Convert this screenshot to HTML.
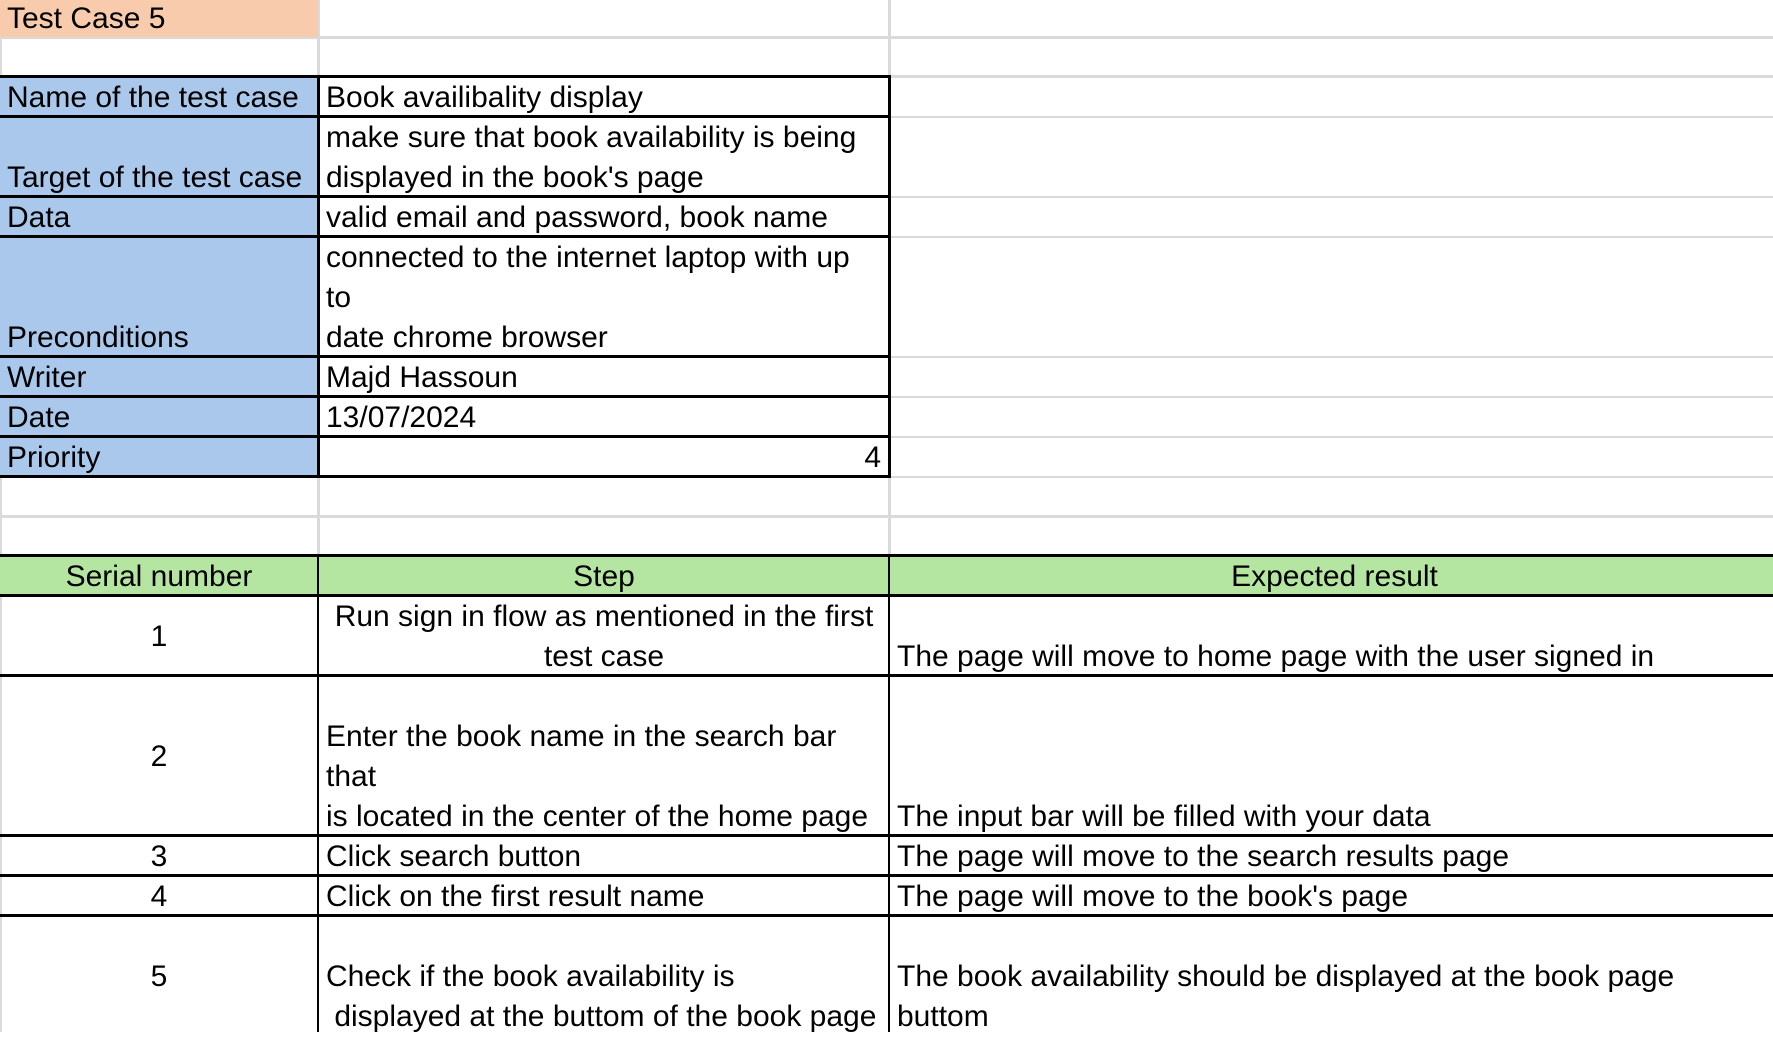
<!DOCTYPE html>
<html><head><meta charset="utf-8"><style>
*{margin:0;padding:0;box-sizing:border-box}
body{width:1773px;height:1032px;overflow:hidden;background:#fff;font-family:"Liberation Sans",Arial,sans-serif;font-size:30px;color:#000;position:relative}
.g{position:absolute;background:#dadada}
.c{position:absolute;display:flex;flex-direction:column;justify-content:flex-end;line-height:40px;white-space:pre;padding-left:7px;overflow:hidden}
.b{position:absolute;background:#000}
</style></head><body>
<div class="g" style="left:0;top:36px;width:1773px;height:3px"></div>
<div class="g" style="left:0;top:75px;width:1773px;height:3px"></div>
<div class="g" style="left:0;top:515px;width:1773px;height:3px"></div>
<div class="g" style="left:0;top:116px;width:1773px;height:2px"></div>
<div class="g" style="left:0;top:196px;width:1773px;height:2px"></div>
<div class="g" style="left:0;top:236px;width:1773px;height:2px"></div>
<div class="g" style="left:0;top:356px;width:1773px;height:2px"></div>
<div class="g" style="left:0;top:396px;width:1773px;height:2px"></div>
<div class="g" style="left:0;top:436px;width:1773px;height:2px"></div>
<div class="g" style="left:0;top:476px;width:1773px;height:2px"></div>
<div class="g" style="left:317px;top:0;width:3px;height:556px"></div>
<div class="g" style="left:888px;top:0;width:3px;height:556px"></div>
<div class="g" style="left:0;top:0;width:2px;height:1032px"></div>

<div style="position:absolute;left:0;top:0;width:318px;height:37px;background:#f8cbad"></div>
<div style="position:absolute;left:0;top:76px;width:318px;height:400px;background:#a9c8eb"></div>
<div style="position:absolute;left:0;top:556px;width:1773px;height:40px;background:#b5e6a1"></div>

<div class="b" style="left:0;top:75px;width:891px;height:3px"></div>
<div class="b" style="left:0;top:115px;width:891px;height:3px"></div>
<div class="b" style="left:0;top:195px;width:891px;height:3px"></div>
<div class="b" style="left:0;top:235px;width:891px;height:3px"></div>
<div class="b" style="left:0;top:355px;width:891px;height:3px"></div>
<div class="b" style="left:0;top:395px;width:891px;height:3px"></div>
<div class="b" style="left:0;top:435px;width:891px;height:3px"></div>
<div class="b" style="left:0;top:475px;width:891px;height:3px"></div>
<div class="b" style="left:317px;top:75px;width:3px;height:403px"></div>
<div class="b" style="left:888px;top:75px;width:3px;height:403px"></div>

<div class="b" style="left:0;top:554px;width:1773px;height:3px"></div>
<div class="b" style="left:0;top:594px;width:1773px;height:3px"></div>
<div class="b" style="left:0;top:674px;width:1773px;height:3px"></div>
<div class="b" style="left:0;top:834px;width:1773px;height:3px"></div>
<div class="b" style="left:0;top:874px;width:1773px;height:3px"></div>
<div class="b" style="left:0;top:914px;width:1773px;height:3px"></div>
<div class="b" style="left:317px;top:554px;width:2px;height:478px"></div>
<div class="b" style="left:888px;top:554px;width:2px;height:478px"></div>

<div class="c" style="left:0;top:0;width:318px;height:37px;line-height:37px">Test Case 5</div>
<div class="c" style="left:0;top:78px;width:318px;height:40px">Name of the test case</div>
<div class="c" style="left:319px;top:78px;width:570px;height:40px">Book availibality display</div>
<div class="c" style="left:0;top:118px;width:318px;height:80px">Target of the test case</div>
<div class="c" style="left:319px;top:118px;width:570px;height:80px">make sure that book availability is being
displayed in the book's page</div>
<div class="c" style="left:0;top:198px;width:318px;height:40px">Data</div>
<div class="c" style="left:319px;top:198px;width:570px;height:40px">valid email and password, book name</div>
<div class="c" style="left:0;top:238px;width:318px;height:120px">Preconditions</div>
<div class="c" style="left:319px;top:238px;width:570px;height:120px">connected to the internet laptop with up
to
date chrome browser</div>
<div class="c" style="left:0;top:358px;width:318px;height:40px">Writer</div>
<div class="c" style="left:319px;top:358px;width:570px;height:40px">Majd Hassoun</div>
<div class="c" style="left:0;top:398px;width:318px;height:40px">Date</div>
<div class="c" style="left:319px;top:398px;width:570px;height:40px">13/07/2024</div>
<div class="c" style="left:0;top:438px;width:318px;height:40px">Priority</div>
<div class="c" style="left:319px;top:438px;width:570px;height:40px;text-align:right;padding-right:8px">4</div>

<div class="c" style="left:0;top:557px;width:318px;height:40px;text-align:center;padding:0">Serial number</div>
<div class="c" style="left:319px;top:557px;width:570px;height:40px;text-align:center;padding:0">Step</div>
<div class="c" style="left:890px;top:557px;width:889px;height:40px;text-align:center;padding:0">Expected result</div>

<div class="c" style="left:0;top:597px;width:318px;height:80px;justify-content:center;text-align:center;padding:0">1</div>
<div class="c" style="left:319px;top:597px;width:570px;height:80px;text-align:center;padding:0">Run sign in flow as mentioned in the first
test case</div>
<div class="c" style="left:890px;top:597px;width:883px;height:80px">The page will move to home page with the user signed in</div>

<div class="c" style="left:0;top:677px;width:318px;height:160px;justify-content:center;text-align:center;padding:0">2</div>
<div class="c" style="left:319px;top:677px;width:570px;height:160px">Enter the book name in the search bar
that
is located in the center of the home page</div>
<div class="c" style="left:890px;top:677px;width:883px;height:160px">The input bar will be filled with your data</div>

<div class="c" style="left:0;top:837px;width:318px;height:40px;text-align:center;padding:0">3</div>
<div class="c" style="left:319px;top:837px;width:570px;height:40px">Click search button</div>
<div class="c" style="left:890px;top:837px;width:883px;height:40px">The page will move to the search results page</div>

<div class="c" style="left:0;top:877px;width:318px;height:40px;text-align:center;padding:0">4</div>
<div class="c" style="left:319px;top:877px;width:570px;height:40px">Click on the first result name</div>
<div class="c" style="left:890px;top:877px;width:883px;height:40px">The page will move to the book's page</div>

<div class="c" style="left:0;top:917px;width:318px;height:120px;justify-content:flex-start;text-align:center;padding:40px 0 0 0">5</div>
<div class="c" style="left:319px;top:917px;width:570px;height:120px;justify-content:flex-start;padding-top:40px">Check if the book availability is
 displayed at the buttom of the book page</div>
<div class="c" style="left:890px;top:917px;width:883px;height:120px;justify-content:flex-start;padding-top:40px">The book availability should be displayed at the book page
buttom</div>
</body></html>
